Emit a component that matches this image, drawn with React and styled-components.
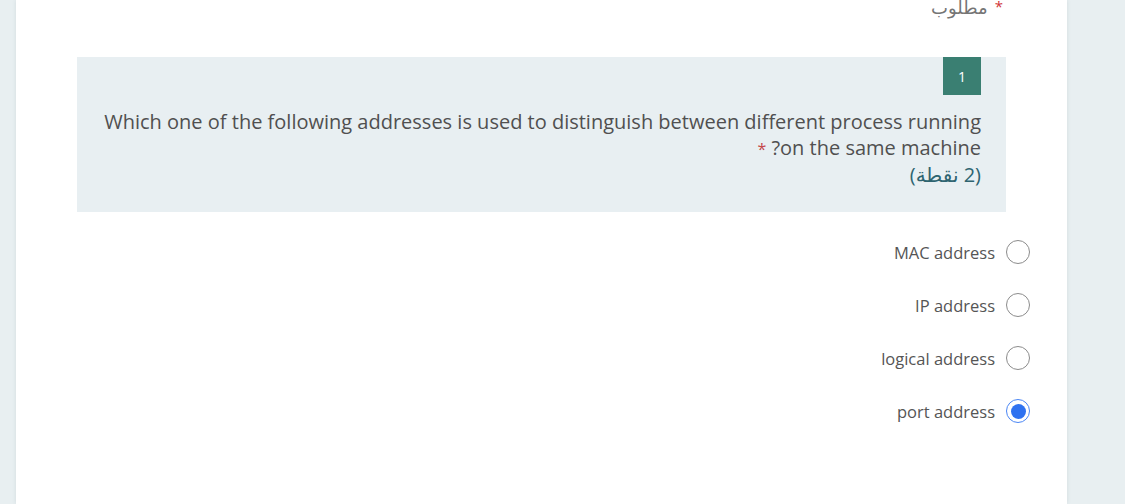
import styled, { createGlobalStyle } from 'styled-components'

const GlobalStyle = createGlobalStyle`
  html, body {
    margin: 0;
    padding: 0;
    background: #e8eff1;
    overflow: hidden;
  }
`

const Page = styled.div`
  height: 504px;
  display: flex;
  padding: 0 58px 0 16px;
  box-sizing: border-box;
  font-family: 'Open Sans', 'DejaVu Sans', sans-serif;
`

const Card = styled.div`
  flex: 1;
  background: #fff;
  direction: rtl;
  box-shadow: 0 0 4px rgba(60, 80, 90, 0.12);
  display: flex;
  flex-direction: column;
`

const Required = styled.div`
  margin: -5px 64px 0 0;
  height: 24px;
  font-size: 18px;
  line-height: 24px;
  color: #757575;

  span {
    display: inline-block;
    vertical-align: top;
    color: #d13438;
    margin-left: 7px;
    padding-top: 4px;
    line-height: 14px;
    font-size: 15px;
  }
`

const QuestionBox = styled.div`
  margin: 38px 61px 0;
  background: #e8eff2;
  padding: 0 25px 24px 23px;
  display: flex;
  flex-direction: column;
  align-items: flex-start;
`

const Badge = styled.div`
  width: 38px;
  height: 38px;
  background: #3a7f72;
  color: #fff;
  font-size: 14px;
  display: flex;
  align-items: center;
  justify-content: center;
`

const Title = styled.div`
  margin-top: 14px;
  font-size: 20px;
  line-height: 26px;
  color: #505050;

  .star {
    color: #c4474a;
    font-size: 16px;
  }
`

const Points = styled.div`
  font-size: 20px;
  line-height: 26px;
  color: #2e6470;
`

const Options = styled.div`
  margin-top: 28px;
  padding-right: 37px;
  display: flex;
  flex-direction: column;
  gap: 29px;
`

const Option = styled.label`
  display: flex;
  align-items: center;
  gap: 11px;
  font-size: 16.5px;
  color: #555;
  height: 24px;
`

const Radio = styled.span`
  width: 24px;
  height: 24px;
  box-sizing: border-box;
  border-radius: 50%;
  border: 1.5px solid ${(p) => (p.checked ? '#4a86f5' : '#8c8c8c')};
  display: flex;
  align-items: center;
  justify-content: center;

  &::after {
    content: '';
    display: ${(p) => (p.checked ? 'block' : 'none')};
    width: 15px;
    height: 15px;
    border-radius: 50%;
    background: #2f72f0;
  }
`

const options = [
  { label: 'MAC address' },
  { label: 'IP address' },
  { label: 'logical address' },
  { label: 'port address', checked: true },
]

export default function App() {
  return (
    <Page>
      <GlobalStyle />
      <Card>
        <Required>
          <span>*</span>مطلوب
        </Required>
        <QuestionBox>
          <Badge>1</Badge>
          <Title>
            Which one of the following addresses is used to distinguish between different process running on the same
            machine? <span className="star">*</span>
          </Title>
          <Points>(2 نقطة)</Points>
        </QuestionBox>
        <Options>
          {options.map((o) => (
            <Option key={o.label}>
              <Radio checked={o.checked} />
              {o.label}
            </Option>
          ))}
        </Options>
      </Card>
    </Page>
  )
}
